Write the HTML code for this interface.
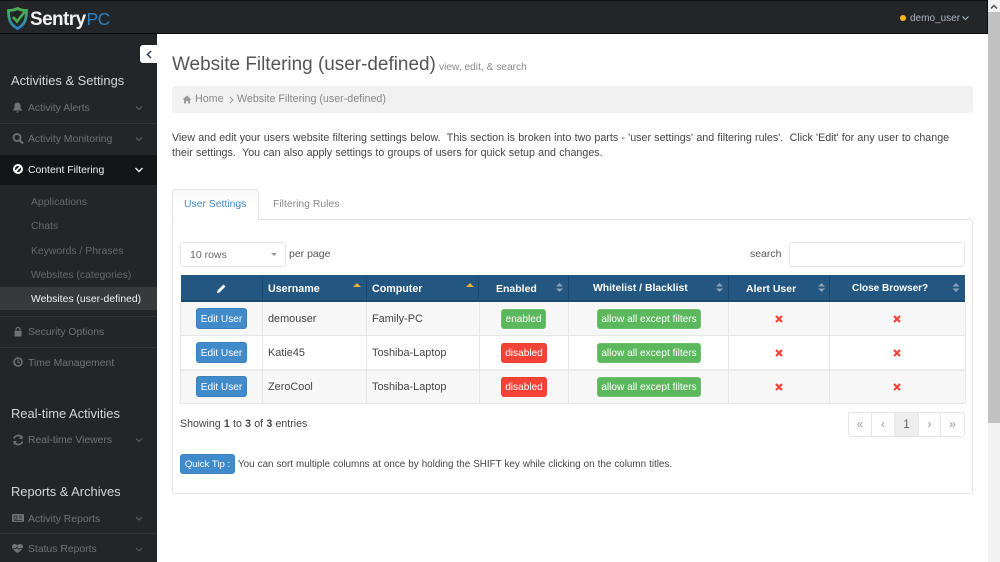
<!DOCTYPE html>
<html><head><meta charset="utf-8"><style>
*{box-sizing:border-box}
html,body{margin:0;padding:0;width:1000px;height:562px;overflow:hidden;background:#fff}
body{font-family:"Liberation Sans",sans-serif;color:#444;font-size:10.7px;position:relative}
.a{position:absolute;white-space:nowrap}
.side{color:#707275;font-size:10.4px}
.sh{color:#d5d6d7;font-size:12.9px}
.sub{color:#66686b;font-size:10.4px}
.sep{position:absolute;left:0;width:157px;height:1px;background:#303235}
.th{position:absolute;top:275px;height:27px;background:#235680;color:#fff;font-weight:bold;font-size:10.5px;line-height:28px;border-right:1px solid #1c4768;border-bottom:2px solid #1c4a70;white-space:nowrap}
.b{position:absolute;border-radius:3px;color:#fff;font-size:10.1px;text-align:center;white-space:nowrap}
.blue{background:#428bca;border:1px solid #3a80bd}
.green{background:#5cb85c;border:1px solid #6fc06f;line-height:19px;height:20px}
.red{background:#f44336;border:1px solid #ea3f33;line-height:19px;height:20px}
.c{position:absolute;color:#444;font-size:10.9px;white-space:nowrap}
.pg{position:absolute;top:412px;height:25px;border:1px solid #e6e6e6;border-left-width:0;text-align:center;line-height:23px;color:#999;font-size:12px}
</style></head><body>

<!-- sidebar + header -->
<div class="a" style="left:0;top:0;width:157px;height:562px;background:#232528"></div>
<div class="a" style="left:0;top:0;width:988px;height:34px;background:#232528;border-top:1px solid #111;border-bottom:1px solid #0c0c0c"></div>
<div class="a" style="left:157px;top:34px;width:831px;height:528px;background:#fff;border-top-left-radius:5px"></div>
<div class="a" style="left:987px;top:0;width:1px;height:34px;background:#0c0c0c"></div>

<!-- logo -->
<svg class="a" style="left:7px;top:7px" width="21" height="23" viewBox="0 0 21 23">
<defs><linearGradient id="g" x1="0" y1="0" x2="0" y2="1"><stop offset="0" stop-color="#4cb050"/><stop offset="1" stop-color="#2d7fc0"/></linearGradient></defs>
<path d="M10.5 1.5C7.5 3 4.500 3.500 1.500 3.500C1.500 11 2.500 17.500 10.500 21.500C18.500 17.500 19.500 11 19.500 3.500C16.500 3.500 13.500 3 10.500 1.500Z" fill="none" stroke="url(#g)" stroke-width="2.800"/>
<path d="M6 10L10 14.500L17.500 5" fill="none" stroke="#4cb050" stroke-width="2.600"/>
</svg>
<div class="a" style="left:30px;top:7px;font-size:19px;line-height:24px;color:#f2f2f2;font-weight:bold;letter-spacing:-.6px">Sentry<span style="color:#2f7fc1;font-weight:normal;font-size:17.5px;margin-left:1px">PC</span></div>

<!-- collapse -->
<div class="a" style="left:140px;top:45px;width:17px;height:18px;background:#fff;border-radius:3px 0 0 3px"></div>
<svg class="a" style="left:146px;top:50px" width="6" height="9"><path d="M5 1L1.500 4.500L5 8" fill="none" stroke="#24405c" stroke-width="1.500"/></svg>

<!-- section headers -->
<div class="a sh" style="left:11px;top:73px">Activities &amp; Settings</div>
<div class="a sh" style="left:11px;top:406px">Real-time Activities</div>
<div class="a sh" style="left:11px;top:484px">Reports &amp; Archives</div>

<!-- active row -->
<div class="a" style="left:0;top:155px;width:157px;height:30px;background:#141516"></div>
<div class="a" style="left:0;top:287px;width:157px;height:23px;background:#37393b"></div>

<div class="sep" style="top:123px"></div>
<div class="sep" style="top:316px"></div>
<div class="sep" style="top:347px"></div>
<div class="sep" style="top:533px"></div>

<!-- items -->
<div class="a side" style="left:28px;top:103px">Activity Alerts</div>
<div class="a side" style="left:28px;top:134px">Activity Monitoring</div>
<div class="a" style="left:28px;top:165px;color:#f2f2f2;font-size:10.4px">Content Filtering</div>
<div class="a sub" style="left:31px;top:197px">Applications</div>
<div class="a sub" style="left:31px;top:221px">Chats</div>
<div class="a sub" style="left:31px;top:246px">Keywords / Phrases</div>
<div class="a sub" style="left:31px;top:270px">Websites (categories)</div>
<div class="a" style="left:31px;top:294px;color:#f0f0f0;font-size:10.4px">Websites (user-defined)</div>
<div class="a side" style="left:28px;top:327px">Security Options</div>
<div class="a side" style="left:28px;top:358px">Time Management</div>
<div class="a side" style="left:28px;top:435px">Real-time Viewers</div>
<div class="a side" style="left:28px;top:514px">Activity Reports</div>
<div class="a side" style="left:28px;top:544px">Status Reports</div>

<!-- sidebar icons -->
<svg class="a" style="left:0;top:0" width="157" height="562" fill="#707275">
<path d="M17.500 102.500c-2.500 0-3 2-3 4c0 2-1 3-2 4h10c-1-1-2-2-2-4c0-2-.5-4-3-4zM16 111.500h3l-1.500 1.500z"/>
<circle cx="17" cy="137.500" r="3.500" fill="none" stroke="#707275" stroke-width="1.800"/><path d="M19.500 140L23 143.500" stroke="#707275" stroke-width="2"/>
<circle cx="18" cy="169" r="4" fill="none" stroke="#fff" stroke-width="2"/><path d="M15.500 171.500L20.500 166.500" stroke="#fff" stroke-width="1.800"/>
<rect x="14.500" y="331" width="7" height="5.500" rx=".5"/><path d="M16 331v-1.500a2 2 0 0 1 4 0v1.500" fill="none" stroke="#707275" stroke-width="1.200"/>
<circle cx="18" cy="362" r="4" fill="none" stroke="#707275" stroke-width="1.600"/><path d="M18 359.500V362.500H20" fill="none" stroke="#707275"/>
<path d="M14 438.500a4.500 4.500 0 0 1 8-1M22.500 441.500a4.500 4.500 0 0 1-8 1" fill="none" stroke="#707275" stroke-width="1.600"/><path d="M22.500 435v4h-3.500zM13.500 445v-4h3.500z"/>
<rect x="12" y="514" width="12" height="8" rx="1"/><path d="M14 516h3v3h-3zM19 516h3M19 518h3M14 520.500h8" stroke="#232528" stroke-width=".7" fill="none"/>
<path d="M17.500 553c-3-2-5.500-4-5.500-6.200c0-3 4-3.800 5.500-1.300c1.500-2.500 5.500-1.700 5.500 1.300c0 2.200-2.500 4.200-5.500 6.200z"/><path d="M13 548.500h3l1-1.500l1.500 2.500l1-1h3" stroke="#232528" stroke-width=".7" fill="none"/>
<g fill="none" stroke="#5e6063" stroke-width="1.100"><path d="M136 106.500l3 3l3-3M136 137.500l3 3l3-3M136 438.500l3 3l3-3M136 517l3 3l3-3M136 548l3 3l3-3"/></g>
<path d="M135.500 168l3.500 3.500l3.500-3.500" fill="none" stroke="#f0f0f0" stroke-width="1.400"/>
</svg>

<!-- user -->
<div class="a" style="left:900px;top:15px;width:6px;height:6px;border-radius:50%;background:#fdb913"></div>
<div class="a" style="left:910px;top:13px;color:#aeb8c4;font-size:10px">demo_user</div>
<svg class="a" style="left:962px;top:16px" width="7" height="5"><path d="M.5 .5L3.500 3.500L6.500 .5" fill="none" stroke="#aeb8c4" stroke-width="1.100"/></svg>

<!-- scrollbar -->
<div class="a" style="left:988px;top:0;width:12px;height:562px;background:#f1f1f1"></div>
<div class="a" style="left:988px;top:12px;width:12px;height:411px;background:#c1c1c1"></div>
<svg class="a" style="left:990px;top:4px" width="8" height="6"><path d="M1 4.500L4 1.500L7 4.500" fill="none" stroke="#505050" stroke-width="1.500"/></svg>

<!-- title -->
<div class="a" style="left:172px;top:52px;font-size:18.95px;line-height:26px;color:#555">Website Filtering (user-defined)</div>
<div class="a" style="left:439px;top:62px;font-size:10.2px;color:#8a8a8a">view, edit, &amp; search</div>

<!-- breadcrumb -->
<div class="a" style="left:172px;top:86px;width:801px;height:27px;background:#f1f1f1;border-radius:3px"></div>
<svg class="a" style="left:182px;top:95px" width="10" height="9"><path d="M5 .5L.5 4.500H2V8.500H4V6H6V8.500H8V4.500H9.500z" fill="#999"/></svg>
<div class="a" style="left:195px;top:93px;color:#888;font-size:10.7px">Home</div>
<svg class="a" style="left:229px;top:96px" width="5" height="8"><path d="M1 1L4 4L1 7" fill="none" stroke="#999" stroke-width="1"/></svg>
<div class="a" style="left:237px;top:93px;color:#888;font-size:10.7px">Website Filtering (user-defined)</div>

<!-- text -->
<div class="a" style="left:172px;top:132px;color:#444;font-size:10.7px;word-spacing:.25px;white-space:pre">View and edit your users website filtering settings below.  This section is broken into two parts - 'user settings' and filtering rules'.  Click 'Edit' for any user to change</div>
<div class="a" style="left:172px;top:147px;color:#444;font-size:10.7px;word-spacing:.25px;white-space:pre">their settings.  You can also apply settings to groups of users for quick setup and changes.</div>

<!-- panel + tabs -->
<div class="a" style="left:172px;top:219px;width:801px;height:275px;border:1px solid #e4e4e4;border-radius:3px"></div>
<div class="a" style="left:172px;top:189px;width:87px;height:31px;background:linear-gradient(#f8f8f8,#fff 60%);border:1px solid #e4e4e4;border-bottom:0;border-radius:3px 3px 0 0"></div>
<div class="a" style="left:184px;top:199px;color:#428bca;font-size:10.4px">User Settings</div>
<div class="a" style="left:273px;top:199px;color:#888;font-size:10.4px">Filtering Rules</div>

<!-- controls -->
<div class="a" style="left:180px;top:242px;width:106px;height:25px;border:1px solid #e6e6e6;border-radius:3px"></div>
<div class="a" style="left:190px;top:249px;color:#666;font-size:10.5px">10 rows</div>
<div class="a" style="left:271px;top:253px;width:0;height:0;border:3px solid transparent;border-top:3px solid #999"></div>
<div class="a" style="left:289px;top:248px;color:#555;font-size:10.5px">per page</div>
<div class="a" style="left:750px;top:248px;color:#555;font-size:10.5px">search</div>
<div class="a" style="left:789px;top:242px;width:176px;height:25px;border:1px solid #e6e6e6;border-radius:3px"></div>

<!-- table header -->
<div class="th" style="left:181px;width:82px"></div>
<div class="th" style="left:263px;width:104px;padding-left:5px;font-size:10.7px">Username</div>
<div class="th" style="left:367px;width:112px;padding-left:5px;font-size:10.7px">Computer</div>
<div class="th" style="left:479px;width:90px;padding-left:17px">Enabled</div>
<div class="th" style="left:569px;width:160px;padding-left:24px;font-size:10.4px">Whitelist / Blacklist</div>
<div class="th" style="left:729px;width:101px;padding-left:17px">Alert User</div>
<div class="th" style="left:830px;width:135px;padding-left:22px;border-right:0;font-size:10px">Close Browser?</div>
<svg class="a" style="left:216px;top:283px" width="11" height="11"><path d="M1 10L1.500 7.500L7.500 1.500L9.500 3.500L3.500 9.500z" fill="#fff"/></svg>

<div class="a" style="left:353px;top:283px;border:4px solid transparent;border-top:0;border-bottom:4px solid #f0ad2e;width:0;height:0"></div>
<div class="a" style="left:466px;top:283px;border:4px solid transparent;border-top:0;border-bottom:4px solid #f0ad2e;width:0;height:0"></div>
<svg class="a" style="left:0;top:0" width="1000" height="320" fill="#8aa3b8">
<path d="M556 286.500l3.500-3.500l3.500 3.500zM556 288.500l3.500 3.500l3.500-3.500zM716 286.500l3.500-3.500l3.500 3.500zM716 288.500l3.500 3.500l3.500-3.500zM818 286.500l3.500-3.500l3.500 3.500zM818 288.500l3.500 3.500l3.500-3.500zM952.500 286.500l3.500-3.500l3.500 3.500zM952.500 288.500l3.500 3.500l3.500-3.500z"/>
</svg>

<!-- rows bg -->
<div class="a" style="left:181px;top:302px;width:784px;height:33px;background:#f7f7f7"></div>
<div class="a" style="left:181px;top:370px;width:784px;height:33px;background:#f7f7f7"></div>
<div class="a" style="left:180px;top:302px;width:1px;height:102px;background:#e6e6e6"></div>
<div class="a" style="left:181px;top:335px;width:784px;height:1px;background:#e6e6e6"></div>
<div class="a" style="left:181px;top:369px;width:784px;height:2px;background:#ebebeb"></div>
<div class="a" style="left:181px;top:403px;width:784px;height:1px;background:#e6e6e6"></div>
<div class="a" style="left:262px;top:302px;width:1px;height:102px;background:#e6e6e6"></div>
<div class="a" style="left:366px;top:302px;width:1px;height:102px;background:#e6e6e6"></div>
<div class="a" style="left:479px;top:302px;width:1px;height:102px;background:#e6e6e6"></div>
<div class="a" style="left:568px;top:302px;width:1px;height:102px;background:#e6e6e6"></div>
<div class="a" style="left:728px;top:302px;width:1px;height:102px;background:#e6e6e6"></div>
<div class="a" style="left:829px;top:302px;width:1px;height:102px;background:#e6e6e6"></div>
<div class="a" style="left:965px;top:302px;width:1px;height:102px;background:#e6e6e6"></div>

<!-- row content -->
<div class="b blue" style="left:196px;top:308px;width:51px;height:21px;line-height:21px">Edit User</div>
<div class="b blue" style="left:196px;top:342px;width:51px;height:21px;line-height:21px">Edit User</div>
<div class="b blue" style="left:196px;top:376px;width:51px;height:21px;line-height:21px">Edit User</div>

<div class="c" style="left:268px;top:313px">demouser</div>
<div class="c" style="left:268px;top:347px">Katie45</div>
<div class="c" style="left:268px;top:381px">ZeroCool</div>
<div class="c" style="left:372px;top:313px">Family-PC</div>
<div class="c" style="left:372px;top:347px">Toshiba-Laptop</div>
<div class="c" style="left:372px;top:381px">Toshiba-Laptop</div>

<div class="b green" style="left:501px;top:309px;width:45px">enabled</div>
<div class="b red" style="left:501px;top:343px;width:46px">disabled</div>
<div class="b red" style="left:501px;top:377px;width:46px">disabled</div>
<div class="b green" style="left:597px;top:309px;width:104px">allow all except filters</div>
<div class="b green" style="left:597px;top:343px;width:104px">allow all except filters</div>
<div class="b green" style="left:597px;top:377px;width:104px">allow all except filters</div>

<svg class="a" style="left:0;top:0" width="1000" height="410" stroke="#f44336" stroke-width="2.200" fill="none">
<path d="M776 316l6 6M782 316l-6 6M894 316l6 6M900 316l-6 6M776 350l6 6M782 350l-6 6M894 350l6 6M900 350l-6 6M776 384l6 6M782 384l-6 6M894 384l6 6M900 384l-6 6"/>
</svg>

<!-- footer -->
<div class="a" style="left:180px;top:418px;color:#444;font-size:10.6px;word-spacing:.3px">Showing <b>1</b> to <b>3</b> of <b>3</b> entries</div>

<div class="pg" style="left:848px;width:24px;border-left-width:1px;border-radius:3px 0 0 3px">«</div>
<div class="pg" style="left:872px;width:23px">‹</div>
<div class="pg" style="left:895px;width:24px;background:#eee;color:#666">1</div>
<div class="pg" style="left:919px;width:22px">›</div>
<div class="pg" style="left:941px;width:24px;border-radius:0 3px 3px 0">»</div>

<div class="b blue" style="left:180px;top:454px;width:55px;height:20px;line-height:20px;font-size:9.6px">Quick Tip :</div>
<div class="a" style="left:238px;top:459px;color:#444;font-size:9.85px;word-spacing:.3px">You can sort multiple columns at once by holding the SHIFT key while clicking on the column titles.</div>

</body></html>
